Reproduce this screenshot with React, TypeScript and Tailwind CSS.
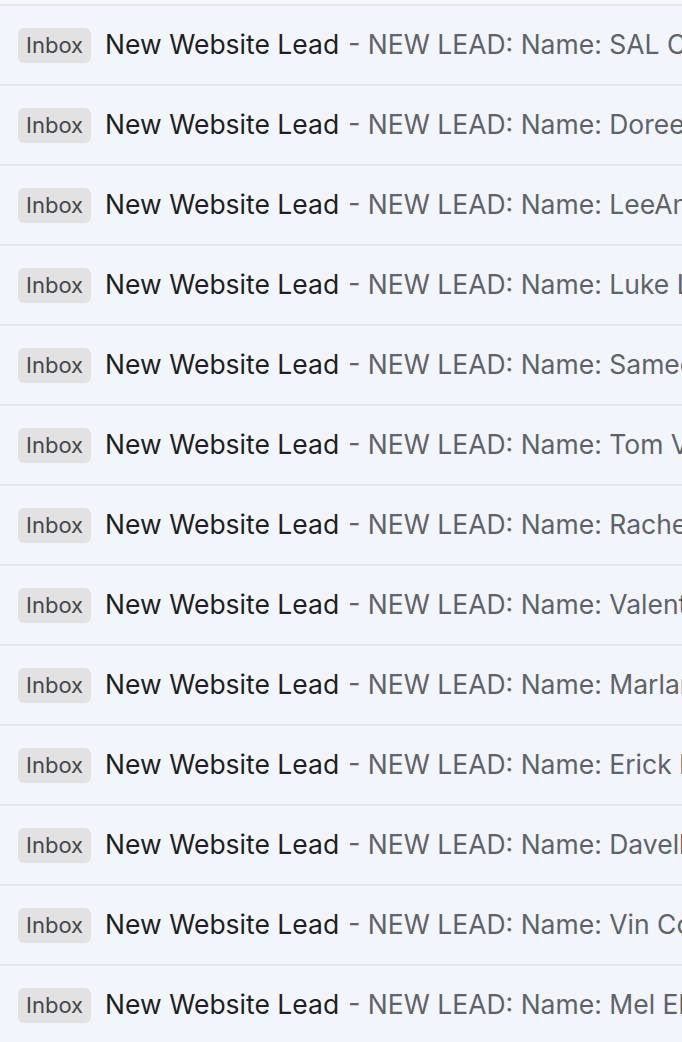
const names = [
  "SAL Cordero",
  "Doreen Miles",
  "LeeAnn Foster",
  "Luke Lawson",
  "Sameer Patel",
  "Tom Vaughn",
  "Rachel Hughes",
  "Valentina Cruz",
  "Marlan Brooks",
  "Erick Flores",
  "Davell Jones",
  "Vin Costa",
  "Mel Ebert",
];

function Row({ name }: { name: string }) {
  return (
    <div className="h-[80px] shrink-0 border-t-2 border-[#e4e7ee] bg-[#f2f5fc] flex items-center pl-[18px] overflow-hidden whitespace-nowrap">
      <span className="shrink-0 h-[35px] px-[8px] rounded-[6px] bg-[#e2e2e2] text-[#444746] text-[22px] flex items-center">
        Inbox
      </span>
      <span className="ml-[14px] text-[#1f1f1f] text-[26.5px]">New Website Lead</span>
      <span className="ml-[9px] text-[#5f6368] text-[26.5px]">- NEW LEAD: Name: {name}</span>
    </div>
  );
}

export default function App() {
  return (
    <div className="w-[682px] h-[1042px] overflow-hidden bg-[#f7f8fa] pt-[4px] flex flex-col font-['Inter',sans-serif]">
      {names.map((n) => (
        <Row key={n} name={n} />
      ))}
    </div>
  );
}
